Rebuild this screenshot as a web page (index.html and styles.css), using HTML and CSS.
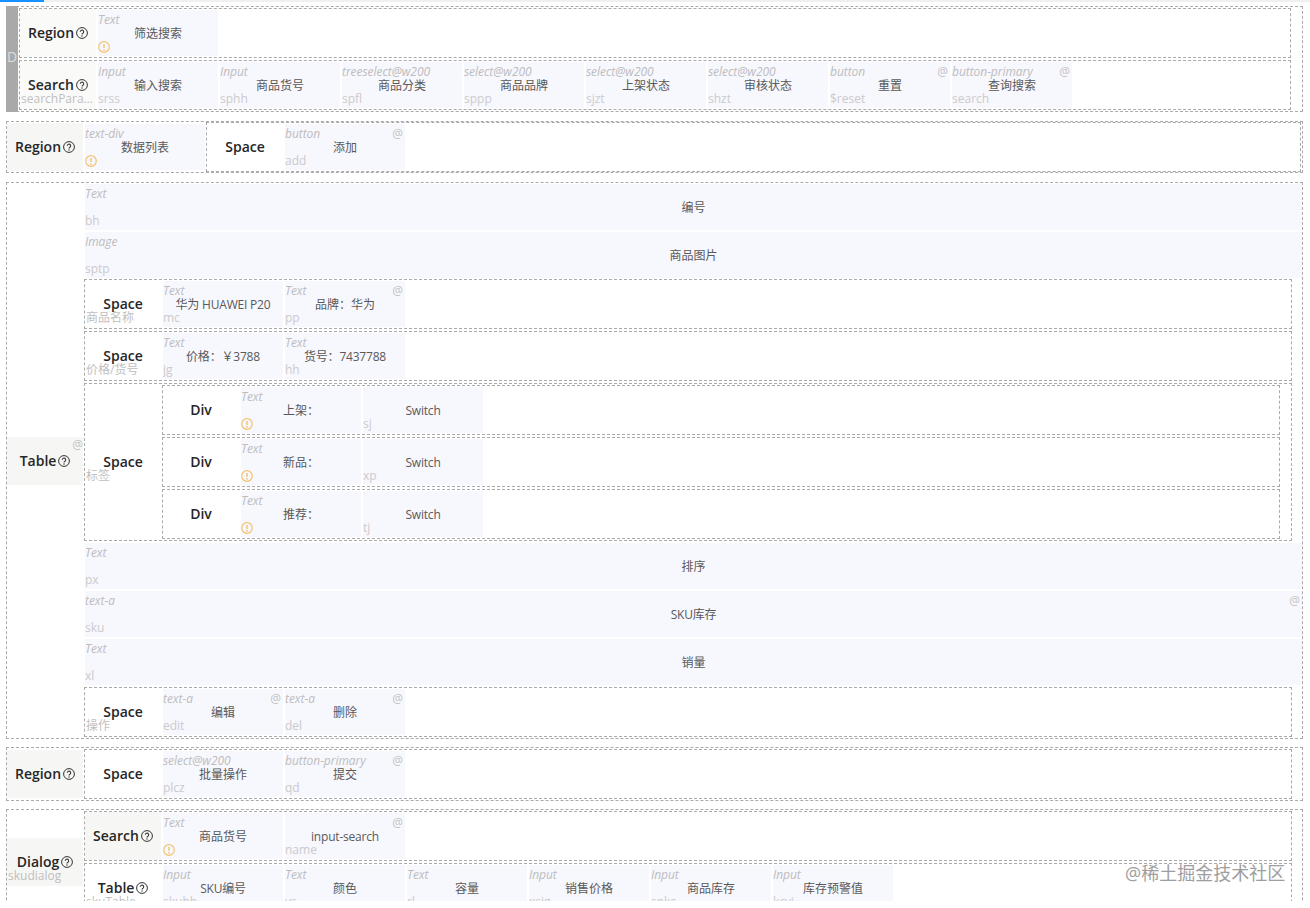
FILE: index.html
```html
<!DOCTYPE html>
<html lang="zh-CN">
<head>
<meta charset="utf-8">
<title>Schema</title>
<link rel="stylesheet" href="styles.css">
</head>
<body>
<svg class="sprite" aria-hidden="true">
  <symbol id="q" viewBox="0 0 12 12"><circle cx="6" cy="6" r="5.4" fill="none" stroke="currentColor" stroke-width="1"/><path d="M4.3 4.8a1.7 1.7 0 1 1 2.7 1.4c-.7.4-1 .7-1 1.3" fill="none" stroke="currentColor" stroke-width="1.05"/><circle cx="6" cy="9" r=".7" fill="currentColor"/></symbol>
  <symbol id="w" viewBox="0 0 12 12"><circle cx="6" cy="6" r="5.3" fill="none" stroke="currentColor" stroke-width="1.2"/><path d="M6 2.9v4" stroke="currentColor" stroke-width="1.5" fill="none"/><circle cx="6" cy="8.9" r=".85" fill="currentColor"/></symbol>
</svg>
<div class="progress"><div class="progress-fill"></div></div>
<main class="page">

  <section class="node padded row-first">
    <div class="dbar">D</div>
    <div class="stack">
      <div class="node inset-deep">
        <div class="label pale"><b>Region</b><svg class="ic"><use href="#q"/></svg></div>
        <div class="cell"><i class="tag">Text</i><span>筛选搜索</span><svg class="warn"><use href="#w"/></svg></div>
      </div>
      <div class="node inset-deep">
        <div class="label pale"><b>Search</b><svg class="ic"><use href="#q"/></svg><em class="sub">searchParams</em></div>
        <div class="cell"><i class="tag">Input</i><span>输入搜索</span><em class="sub">srss</em></div>
        <div class="cell"><i class="tag">Input</i><span>商品货号</span><em class="sub">sphh</em></div>
        <div class="cell"><i class="tag">treeselect@w200</i><span>商品分类</span><em class="sub">spfl</em></div>
        <div class="cell"><i class="tag">select@w200</i><span>商品品牌</span><em class="sub">sppp</em></div>
        <div class="cell"><i class="tag">select@w200</i><span>上架状态</span><em class="sub">sjzt</em></div>
        <div class="cell"><i class="tag">select@w200</i><span>审核状态</span><em class="sub">shzt</em></div>
        <div class="cell"><i class="tag">button</i><u class="at">@</u><span>重置</span><em class="sub">$reset</em></div>
        <div class="cell"><i class="tag">button-primary</i><u class="at">@</u><span>查询搜索</span><em class="sub">search</em></div>
      </div>
    </div>
  </section>

  <section class="node row-second">
    <div class="label tinted"><b>Region</b><svg class="ic"><use href="#q"/></svg></div>
    <div class="cell"><i class="tag">text-div</i><span>数据列表</span><svg class="warn"><use href="#w"/></svg></div>
    <div class="node grow edge">
      <div class="label"><b>Space</b></div>
      <div class="cell"><i class="tag">button</i><u class="at">@</u><span>添加</span><em class="sub">add</em></div>
    </div>
  </section>

  <section class="node padded row-table">
    <div class="label tinted"><b>Table</b><svg class="ic"><use href="#q"/></svg><u class="at">@</u></div>
    <div class="stack">
      <div class="cell band"><i class="tag">Text</i><span>编号</span><em class="sub">bh</em></div>
      <div class="cell band"><i class="tag">Image</i><span>商品图片</span><em class="sub">sptp</em></div>
      <div class="node inset tight">
        <div class="label"><b>Space</b><em class="sub">商品名称</em></div>
        <div class="cell"><i class="tag">Text</i><span class="lat">华为 HUAWEI P20</span><em class="sub">mc</em></div>
        <div class="cell"><i class="tag">Text</i><u class="at">@</u><span>品牌：华为</span><em class="sub">pp</em></div>
      </div>
      <div class="node inset">
        <div class="label"><b>Space</b><em class="sub">价格/货号</em></div>
        <div class="cell"><i class="tag">Text</i><span class="lat">价格：￥3788</span><em class="sub">jg</em></div>
        <div class="cell"><i class="tag">Text</i><span class="lat">货号：7437788</span><em class="sub">hh</em></div>
      </div>
      <div class="node inset padded">
        <div class="label"><b>Space</b><em class="sub">标签</em></div>
        <div class="stack">
          <div class="node inset-deep">
            <div class="label"><b>Div</b></div>
            <div class="cell"><i class="tag">Text</i><span>上架：</span><svg class="warn"><use href="#w"/></svg></div>
            <div class="cell"><span class="lat">Switch</span><em class="sub">sj</em></div>
          </div>
          <div class="node inset-deep">
            <div class="label"><b>Div</b></div>
            <div class="cell"><i class="tag">Text</i><span>新品：</span><svg class="warn"><use href="#w"/></svg></div>
            <div class="cell"><span class="lat">Switch</span><em class="sub">xp</em></div>
          </div>
          <div class="node inset-deep">
            <div class="label"><b>Div</b></div>
            <div class="cell"><i class="tag">Text</i><span>推荐：</span><svg class="warn"><use href="#w"/></svg></div>
            <div class="cell"><span class="lat">Switch</span><em class="sub">tj</em></div>
          </div>
        </div>
      </div>
      <div class="cell band"><i class="tag">Text</i><span>排序</span><em class="sub">px</em></div>
      <div class="cell band"><i class="tag">text-a</i><u class="at">@</u><span class="lat">SKU库存</span><em class="sub">sku</em></div>
      <div class="cell band"><i class="tag">Text</i><span>销量</span><em class="sub">xl</em></div>
      <div class="node inset">
        <div class="label"><b>Space</b><em class="sub">操作</em></div>
        <div class="cell"><i class="tag">text-a</i><u class="at">@</u><span>编辑</span><em class="sub">edit</em></div>
        <div class="cell"><i class="tag">text-a</i><u class="at">@</u><span>删除</span><em class="sub">del</em></div>
      </div>
    </div>
  </section>

  <section class="node padded row-bottom">
    <div class="label tinted"><b>Region</b><svg class="ic"><use href="#q"/></svg></div>
    <div class="stack">
      <div class="node inset">
        <div class="label"><b>Space</b></div>
        <div class="cell"><i class="tag">select@w200</i><span>批量操作</span><em class="sub">plcz</em></div>
        <div class="cell"><i class="tag">button-primary</i><u class="at">@</u><span>提交</span><em class="sub">qd</em></div>
      </div>
    </div>
  </section>

  <section class="node padded">
    <div class="label tinted"><b>Dialog</b><svg class="ic"><use href="#q"/></svg><em class="sub">skudialog</em></div>
    <div class="stack">
      <div class="node inset">
        <div class="label tinted"><b>Search</b><svg class="ic"><use href="#q"/></svg></div>
        <div class="cell"><i class="tag">Text</i><span>商品货号</span><svg class="warn"><use href="#w"/></svg></div>
        <div class="cell"><u class="at">@</u><span class="lat">input-search</span><em class="sub">name</em></div>
      </div>
      <div class="node inset">
        <div class="label"><b>Table</b><svg class="ic"><use href="#q"/></svg><em class="sub">skuTable</em></div>
        <div class="cell"><i class="tag">Input</i><span class="lat">SKU编号</span><em class="sub">skubh</em></div>
        <div class="cell"><i class="tag">Text</i><span>颜色</span><em class="sub">ys</em></div>
        <div class="cell"><i class="tag">Text</i><span>容量</span><em class="sub">rl</em></div>
        <div class="cell"><i class="tag">Input</i><span>销售价格</span><em class="sub">xsjg</em></div>
        <div class="cell"><i class="tag">Input</i><span>商品库存</span><em class="sub">spkc</em></div>
        <div class="cell"><i class="tag">Input</i><span>库存预警值</span><em class="sub">kcyj</em></div>
      </div>
    </div>
  </section>
</main>
<div class="watermark">@稀土掘金技术社区</div>
</body>
</html>
```
FILE: styles.css
```css
html, body {
  margin: 0;
  height: 908px;
  overflow: hidden;
  background: #fff;
}
body {
  font-family: "Open Sans", "Noto Sans CJK SC", sans-serif;
  font-size: 12px;
  line-height: 16px;
  color: #595959;
}
.sprite { display: none; }
.progress { height: 2px; background: #f0f0f0; }
.progress-fill { width: 44px; height: 2px; background: #1890ff; }
.page {
  box-sizing: border-box;
  height: 899px;
  overflow: hidden;
  padding: 4px 7px 0 6px;
}

.node {
  display: flex;
  align-items: center;
  gap: 2px;
  border: 1px dashed #aaa;
  box-sizing: border-box;
  margin-bottom: 9px;
  min-width: 0;
}
.node .node { margin-bottom: 0; margin-left: -1px; }
.padded { padding: 1px 0; }
.row-table, .row-bottom { margin-bottom: 8px; }
.row-first { align-items: stretch; }
.grow { flex: 1; }
.edge { margin-right: 1px; }
.inset { margin-right: 10px; }
.inset-deep { margin-right: 11px; }
.tight { margin-top: -1px; }

.dbar {
  width: 12px;
  box-sizing: border-box;
  margin: -2px 0 -2px -1px;
  padding-bottom: 4px;
  background: #a9a9a9;
  color: #ddd;
  font-size: 14px;
  display: flex;
  align-items: center;
  justify-content: center;
  flex: none;
}
.stack {
  flex: 1;
  min-width: 0;
  display: flex;
  flex-direction: column;
  gap: 2px;
}

.label {
  position: relative;
  flex: none;
  width: 76px;
  height: 48px;
  display: flex;
  align-items: center;
  justify-content: center;
  color: #262626;
  font-size: 14px;
  line-height: 20px;
}
.label b { font-weight: 600; }
.tinted { background: #f6f6f4; }
.pale { background: #fafaf9; }
.ic { width: 12px; height: 12px; margin-left: 2px; color: #333; flex: none; }

.cell {
  position: relative;
  flex: none;
  box-sizing: border-box;
  width: 120px;
  height: 46px;
  padding-top: 2px;
  display: flex;
  align-items: center;
  justify-content: center;
  background: #f7f7fe;
}
.lat { letter-spacing: -0.2px; }
.band { width: auto; align-self: stretch; }
.tag {
  position: absolute;
  left: 0;
  top: 2px;
  color: #bdbdbd;
  white-space: nowrap;
  letter-spacing: -0.05px;
}
.sub {
  position: absolute;
  left: 0;
  right: 0;
  bottom: 1px;
  font-style: normal;
  font-size: 12px;
  line-height: 16px;
  font-weight: 400;
  color: #cbcbcb;
  white-space: nowrap;
  overflow: hidden;
  text-overflow: ellipsis;
}
.label .sub { left: 1px; bottom: 2px; color: #bfbfbf; }
.at {
  position: absolute;
  right: 2px;
  top: 2px;
  text-decoration: none;
  font-size: 12px;
  line-height: 16px;
  font-weight: 400;
  color: #c4c4c4;
}
.label .at { top: 0; right: 0; }
.warn {
  position: absolute;
  left: 0;
  bottom: 3px;
  width: 12px;
  height: 12px;
  color: #f3c470;
}
.watermark {
  position: absolute;
  left: 1125px;
  top: 861px;
  font-size: 18px;
  line-height: 24px;
  color: #9e9e9e;
  white-space: nowrap;
}
```
